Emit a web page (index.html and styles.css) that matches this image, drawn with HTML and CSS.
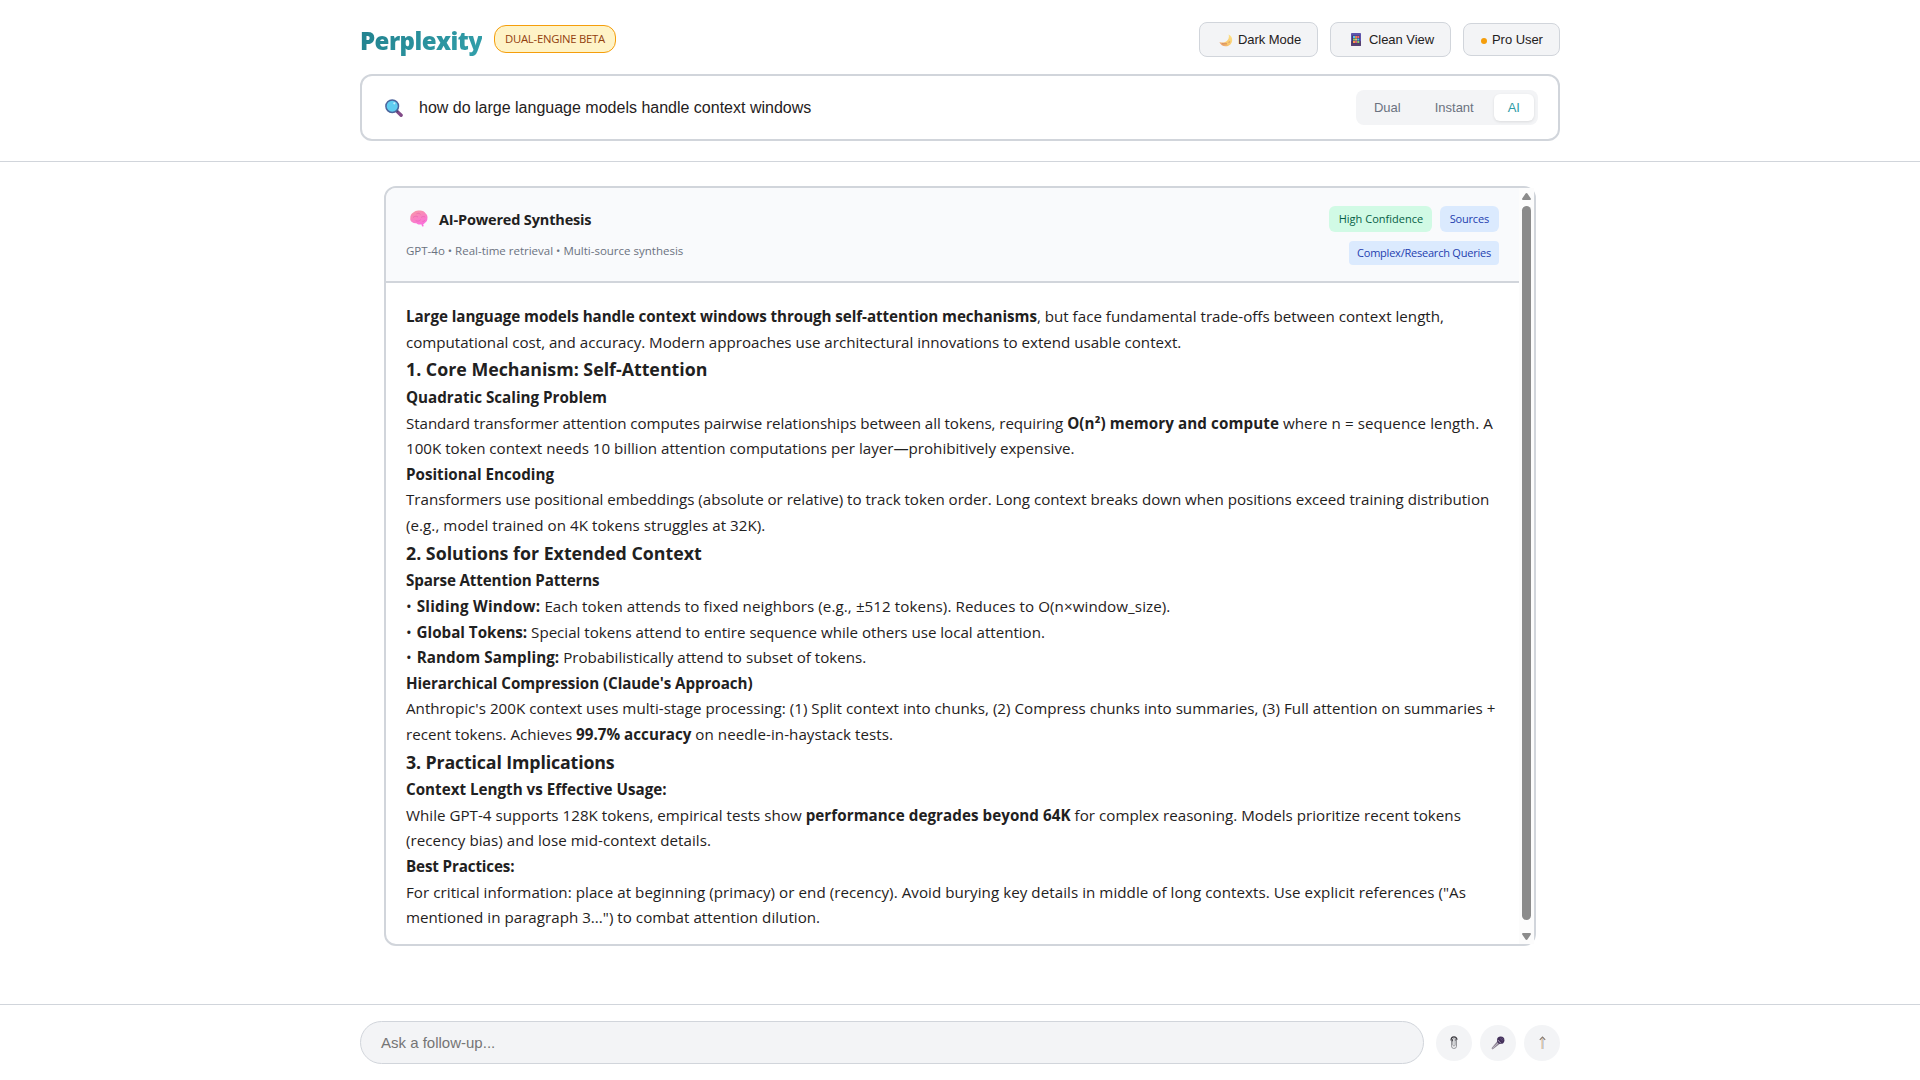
FILE: index.html
```html
<!DOCTYPE html>
<html lang="en">
<head>
<meta charset="utf-8">
<title>Perplexity</title>
<link rel="stylesheet" href="styles.css">
</head>
<body>
<header class="header">
  <div class="wrap">
    <div class="topbar">
      <div class="brand">
        <span class="logo">Perplexity</span>
        <span class="beta">DUAL-ENGINE BETA</span>
      </div>
      <div class="actions">
        <button class="btn">
          <svg class="ico-moon" width="14" height="13" viewBox="0 0 14 13"><defs><linearGradient id="mg" x1="1" y1="0" x2="0" y2="1"><stop offset="0" stop-color="#fde68a"/><stop offset=".6" stop-color="#f8c56c"/><stop offset="1" stop-color="#e58e6a"/></linearGradient></defs><path d="M9.600.4C12 1.300 13.400 3.600 13.200 6.200 12.900 9.800 10 12.400 6.500 12.300 3.900 12.200 1.400 10.500.4 7.900 2.700 8.900 5.500 8.800 7.600 7.200 9.700 5.500 10.400 2.800 9.600.4Z" fill="url(#mg)"/><path d="M3 9.800h5M9.500 8.300l1.600-.5" stroke="#c98263" stroke-width=".8" fill="none"/></svg>
          <span>Dark Mode</span>
        </button>
        <button class="btn btn-clean">
          <svg class="ico-phone" width="10" height="13" viewBox="0 0 10 13"><rect width="10" height="13" rx=".8" fill="#5f55ad"/><rect y="8" width="10" height="5" rx=".8" fill="#574070"/><rect x="1" y="2.500" width="8" height="8" fill="#44386f"/><path d="M2 3h2v2H2zM6.300 5.500h2v2h-2z" fill="#4fc3f7"/><path d="M4.200 3h1.700v2H4.200zM2 8h2v2H2z" fill="#f9964b"/><path d="M6.300 3h2v2h-2zM4.200 8h1.700v2H4.200z" fill="#ee6478"/><path d="M2 5.500h2v2H2zM6.300 8h2v2h-2z" fill="#8fd068"/><path d="M4.200 5.500h1.700v2H4.200z" fill="#ffe070"/></svg>
          <span>Clean View</span>
        </button>
        <button class="btn btn-user"><i class="dot"></i><span>Pro User</span></button>
      </div>
    </div>
    <div class="search">
      <svg class="ico-search" width="18" height="18" viewBox="0 0 18 18"><path d="M11.300 11.600l4.800 4.700" stroke="#814a87" stroke-width="3.400" stroke-linecap="round"/><path d="M11 11l1.800 1.800" stroke="#4d3a69" stroke-width="1.800"/><circle cx="7.200" cy="7.200" r="6.300" fill="#5fcdf0" stroke="#4b649c" stroke-width="1.500"/><circle cx="9.300" cy="4.300" r="1.100" fill="#c4f0fc"/></svg>
      <span class="query">how do large language models handle context windows</span>
      <div class="modes">
        <button class="mode">Dual</button>
        <button class="mode">Instant</button>
        <button class="mode active">AI</button>
      </div>
    </div>
  </div>
</header>

<main class="main">
  <section class="card">
    <div class="card-col">
      <div class="card-head">
        <div class="head-left">
          <h2 class="title">
            <svg class="ico-brain" width="18" height="17" viewBox="0 0 18 17"><defs><linearGradient id="bg" x1="0" y1="0" x2=".4" y2="1"><stop offset="0" stop-color="#f79aa3"/><stop offset="1" stop-color="#fb6fdb"/></linearGradient></defs><path d="M2.300 12.200C.7 11.400 0 9.900.3 8.300.1 5.900 1.300 3.700 3.300 2.600 4.900.8 7.400.2 9.500.6c2.600-.3 5 .9 6.200 2.900 1.500 1.300 2.100 3.200 1.700 5 .1 1.900-.9 3.600-2.400 4.300-.6.900-1.200 1.200-1.800 1.300l.5 2.100-1.500.2-.9-2.100c-1.800.6-3.800.2-5-1.100-1.500.3-3-.1-4-1Z" fill="url(#bg)"/><path d="M3 7.500c1.500-1.500 3.500-1.600 5-.5M6.500 3.800c1.500-.8 3-.5 4 .6M11 7.500c1.300-1.200 3-1.200 4.200-.3M5.500 10.700c2 .8 4 .4 5.200-1M12.500 11.500c1.200 0 2-.5 2.600-1.400" stroke="#e55fae" stroke-width=".6" fill="none"/></svg>
            <span>AI-Powered Synthesis</span>
          </h2>
          <div class="sub">GPT-4o • Real-time retrieval • Multi-source synthesis</div>
        </div>
        <div class="tags">
          <div class="tag-row"><span class="tag green">High Confidence</span><span class="tag blue narrow">Sources</span></div>
          <span class="tag blue narrow use">Complex/Research Queries</span>
        </div>
      </div>
      <div class="answer">
        <p><span class="ln"><b class="s-2">Large language models handle context windows through self-attention mechanisms</b>, but face fundamental trade-offs between context length,</span>
        <span class="ln s-1">computational cost, and accuracy. Modern approaches use architectural innovations to extend usable context.</span></p>
        <h3>1. Core Mechanism: Self-Attention</h3>
        <h4>Quadratic Scaling Problem</h4>
        <p><span class="ln"><span class="s-2">Standard transformer attention computes pairwise relationships between all tokens, requiring</span> <b class="s3">O(n²) memory and compute</b> <span class="s3">where n = sequence length. A</span></span>
        <span class="ln">100K token context needs 10 billion attention computations per layer—prohibitively expensive.</span></p>
        <h4>Positional Encoding</h4>
        <p><span class="ln s-1">Transformers use positional embeddings (absolute or relative) to track token order. Long context breaks down when positions exceed training distribution</span>
        <span class="ln s2">(e.g., model trained on 4K tokens struggles at 32K).</span></p>
        <h3>2. Solutions for Extended Context</h3>
        <h4 class="s-3">Sparse Attention Patterns</h4>
        <p><span class="ln item"><i>•</i> <b class="s4">Sliding Window:</b> <span class="s3">Each token attends to fixed neighbors (e.g., ±512 tokens). Reduces to O(n×window_size).</span></span>
        <span class="ln item s-1"><i>•</i> <b class="s-1">Global Tokens:</b> Special tokens attend to entire sequence while others use local attention.</span>
        <span class="ln item"><i>•</i> <b class="s3">Random Sampling:</b> Probabilistically attend to subset of tokens.</span></p>
        <h4 class="s-2">Hierarchical Compression (Claude's Approach)</h4>
        <p><span class="ln s1">Anthropic's 200K context uses multi-stage processing: (1) Split context into chunks, (2) Compress chunks into summaries, (3) Full attention on summaries +</span>
        <span class="ln">recent tokens. Achieves <b>99.7% accuracy</b> <span class="s2">on needle-in-haystack tests.</span></span></p>
        <h3 class="s-3">3. Practical Implications</h3>
        <h4>Context Length vs Effective Usage:</h4>
        <p><span class="ln s1">While GPT-4 supports 128K tokens, empirical tests show <b class="s2">performance degrades beyond 64K</b> for complex reasoning. Models prioritize recent tokens</span>
        <span class="ln s2">(recency bias) and lose mid-context details.</span></p>
        <h4 class="s-3">Best Practices:</h4>
        <p><span class="ln s2">For critical information: place at beginning (primacy) or end (recency). Avoid burying key details in middle of long contexts. Use explicit references ("As</span>
        <span class="ln s1">mentioned in paragraph 3...") to combat attention dilution.</span></p>
      </div>
    </div>
    <div class="scrollbar">
      <svg width="9" height="7" viewBox="0 0 9 7"><path d="M4.500 0c.4 0 .7.2.9.5l3.400 5c.4.7.1 1.500-.8 1.500H1C.1 7-.2 6.200.2 5.500l3.400-5c.2-.3.5-.5.9-.5Z" fill="#8b8b8b"/></svg>
      <div class="thumb"></div>
      <svg width="9" height="7" viewBox="0 0 9 7"><path d="M4.500 7c.4 0 .7-.2.9-.5l3.400-5C9.200.8 8.900 0 8 0H1C.1 0-.2.8.2 1.500l3.400 5c.2.3.5.5.9.5Z" fill="#8b8b8b"/></svg>
    </div>
  </section>
</main>

<footer class="footer">
  <div class="wrap foot-row">
    <div class="follow">Ask a follow-up...</div>
    <div class="foot-btns">
      <button class="round"><svg width="8" height="14" viewBox="0 0 8 14"><path d="M1.500 4.500V9.800a2.500 2.500 0 0 0 5 .4V3.500a2 2 0 0 0-3.700-.5V9a1.200 1.200 0 0 0 2.300.2V5" fill="none" stroke="#8b8b90" stroke-width=".9"/><path d="M1 4.600C1 2 2.300.9 4 .9s3 1 3 2.900" fill="none" stroke="#3c3a40" stroke-width="1.200"/><path d="M2.300 3.300v2M5.200 3.300v1.500" stroke="#3c3a40" stroke-width="1.100"/></svg></button>
      <button class="round"><svg width="14" height="14" viewBox="0 0 14 14"><path d="M6.600 4.800L.5 12.200l1 1.200 7.800-5.900Z" fill="#8d8594"/><path d="M1.500 12.300l6-5.600" stroke="#c5bfca" stroke-width=".8"/><circle cx="9.700" cy="4.200" r="3.700" fill="#43305a"/><path d="M6.700 3.900l3.500 3.700" stroke="#a79db3" stroke-width="1"/><path d="M9 2.300l2.600 2.500M10.500 1.700l1.700 1.800" stroke="#75628c" stroke-width=".7"/></svg></button>
      <button class="round"><svg width="7" height="13" viewBox="0 0 7 13"><path d="M4 1v12" stroke="#8fb4ea" stroke-width="1"/><path d="M3 1.500v11.500" stroke="#eab676" stroke-width="1"/><path d="M.8 3.900L3.500 1l2.700 2.900" fill="none" stroke="#85786e" stroke-width="1.100"/></svg></button>
    </div>
  </div>
</footer>
</body>
</html>
```
FILE: styles.css
```css
* { box-sizing: border-box; margin: 0; padding: 0; }

body {
  height: 1080px;
  display: flex;
  flex-direction: column;
  overflow: hidden;
  background: #fff;
  color: #1f2121;
  font-family: "Open Sans", "Noto Sans", sans-serif;
}

button {
  border: 0;
  font-family: "Liberation Sans", Arial, sans-serif;
  font-size: 13px;
  color: inherit;
}

svg { display: block; flex: none; }

.wrap { width: 1200px; margin: 0 auto; }

/* Header */
.header {
  height: 162px;
  padding-top: 22px;
  border-bottom: 1px solid #d1d5db;
}
.topbar {
  height: 35px;
  display: flex;
  justify-content: space-between;
  align-items: center;
}
.brand { display: flex; align-items: center; }
.logo {
  width: 122px;
  margin-right: 12px;
  padding-top: 2px;
  font-size: 24px;
  line-height: 33px;
  font-weight: 800;
  letter-spacing: -0.55px;
  background: linear-gradient(135deg, #21808d, #32a0ab);
  -webkit-background-clip: text;
  background-clip: text;
  color: transparent;
}
.beta {
  height: 28px;
  width: 122px;
  text-align: center;
  font-size: 11.3px;
  line-height: 26px;
  font-weight: 500;
  letter-spacing: -0.25px;
  color: #92400e;
  background: #fef3c7;
  border: 1px solid #f59e0b;
  border-radius: 12px;
  margin-bottom: 1px;
}
.actions { display: flex; align-items: center; gap: 12px; }
.btn {
  height: 35px;
  width: 119px;
  padding-left: 19px;
  display: flex;
  align-items: center;
  background: #f3f4f6;
  border: 1px solid #d1d5db;
  border-radius: 8px;
  letter-spacing: -0.05px;
}
.ico-moon { margin: 2px 5px 0 0; }
.btn-clean { width: 121px; padding-left: 20px; }
.ico-phone { margin-right: 8px; }
.btn-user { width: 97px; height: 33px; padding-left: 17px; }
.btn-user span { margin-bottom: 1px; }
.dot {
  width: 6px;
  height: 6px;
  border-radius: 50%;
  background: #f59e0b;
  margin: 2px 5px 0 0;
}

/* Search */
.search {
  margin-top: 17px;
  height: 67px;
  display: flex;
  align-items: center;
  padding: 0 20px 0 23px;
  border: 2px solid #d1d5db;
  border-radius: 12px;
}
.query {
  flex: 1;
  margin-left: 16px;
  font: 16px/20px "Liberation Sans", Arial, sans-serif;
}
.modes {
  display: flex;
  gap: 6px;
  height: 35px;
  padding: 4px;
  background: #f3f4f6;
  border-radius: 8px;
}
.mode {
  height: 27px;
  padding: 0 14px;
  background: transparent;
  border-radius: 6px;
  color: #6b7280;
}
.mode.active {
  background: #fff;
  color: #2d9ba6;
  box-shadow: 0 1px 3px rgba(0, 0, 0, 0.1);
}

/* Answer card */
.main { flex: 1; padding-top: 24px; }
.card {
  width: 1152px;
  height: 760px;
  margin: 0 auto;
  display: flex;
  border: 2px solid #d1d5db;
  border-radius: 12px;
}
.card-col { flex: 1; min-width: 0; }
.card-head {
  height: 95px;
  padding: 18px 20px 0;
  display: flex;
  justify-content: space-between;
  background: #f9fafc;
  border-bottom: 2px solid #d1d5db;
  border-top-left-radius: 10px;
}
.title {
  height: 26px;
  display: flex;
  align-items: center;
  gap: 11px;
  padding-left: 4px;
  font-size: 14.5px;
  font-weight: 700;
  letter-spacing: -0.16px;
}
.ico-brain { margin-top: -2px; }
.sub {
  margin-top: 10px;
  font-size: 11.5px;
  line-height: 18px;
  color: #6b7280;
}
.tags {
  display: flex;
  flex-direction: column;
  align-items: flex-end;
  gap: 9px;
}
.tag-row { display: flex; gap: 8px; }
.tag {
  height: 26px;
  padding: 0 10px;
  border-radius: 6px;
  font-size: 11px;
  line-height: 26px;
  font-weight: 500;
}
.tag.green { background: #d1fae5; color: #065f46; width: 103px; padding: 0 0 0 10px; letter-spacing: 0.02px; }
.tag.blue { background: #dbeafe; color: #1e40af; }
.tag.narrow { letter-spacing: -0.18px; }
.tag.use { height: 24px; line-height: 24px; padding: 0 8px; border-radius: 4px; letter-spacing: -0.22px; }

.answer {
  padding: 21px 20px 0;
  font-size: 15.15px;
  line-height: 25.6px;
}
.ln { display: block; white-space: nowrap; }
.answer b, .answer h4 { font-size: 15.2px; font-weight: 700; }
.answer h3 {
  font-size: 17.8px;
  line-height: 29.8px;
  font-weight: 700;
}
.item i { font-style: normal; margin-right: 1px; }

/* Tracking steps */
.s-3 { letter-spacing: -0.14px; }
.s-2 { letter-spacing: -0.07px; }
.s-1 { letter-spacing: -0.02px; }
.s1 { letter-spacing: 0.02px; }
.s2 { letter-spacing: 0.05px; }
.s3 { letter-spacing: 0.085px; }
.s4 { letter-spacing: 0.25px; }

.scrollbar {
  width: 15px;
  padding: 5px 3px 4px;
  display: flex;
  flex-direction: column;
  align-items: center;
  background: #fcfcfc;
}
.thumb {
  flex: 1;
  width: 9px;
  margin: 6px 0 13px;
  border-radius: 5px;
  background: #8b8b8b;
}

/* Follow-up bar */
.footer {
  height: 76px;
  padding-top: 16px;
  border-top: 1px solid #d1d5db;
}
.foot-row { display: flex; align-items: center; gap: 12px; }
.follow {
  flex: 1;
  height: 43px;
  padding-left: 20px;
  font: 15px/41px "Liberation Sans", Arial, sans-serif;
  color: #757575;
  background: #f3f4f6;
  border: 1px solid #d1d5db;
  border-radius: 24px;
}
.foot-btns { display: flex; gap: 8px; }
.round {
  width: 36px;
  height: 36px;
  display: flex;
  align-items: center;
  justify-content: center;
  background: #f3f4f6;
  border-radius: 50%;
}
```
